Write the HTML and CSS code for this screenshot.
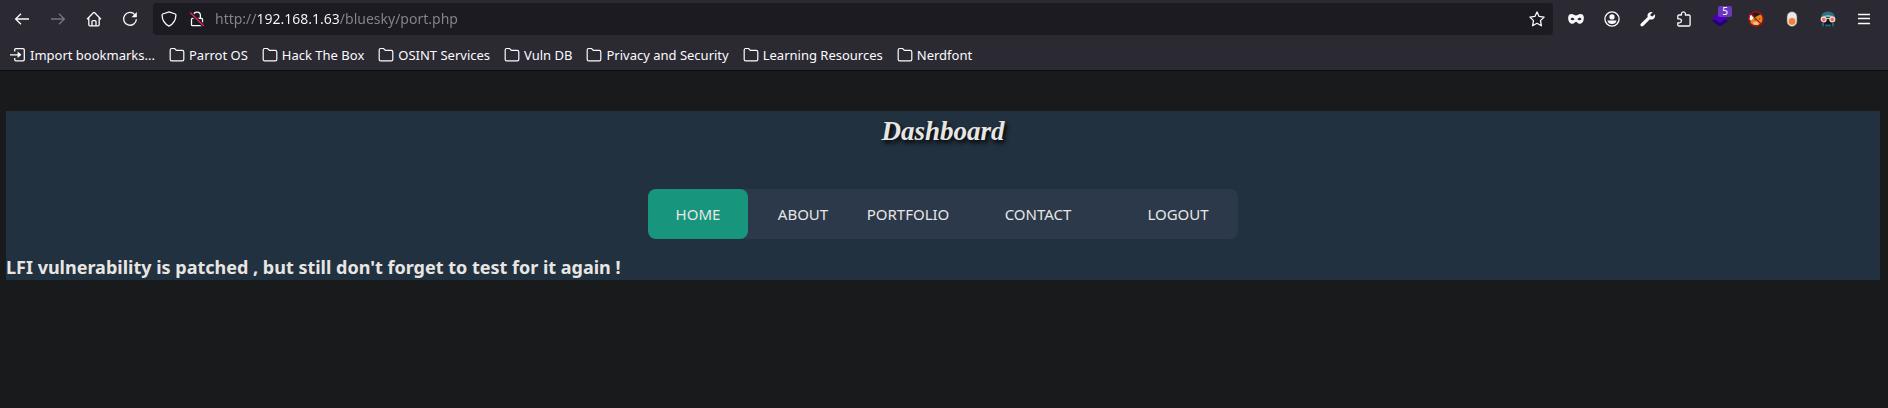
FILE: index.html
```html
<!DOCTYPE html>
<html lang="en">
<head>
<meta charset="utf-8">
<meta name="viewport" content="width=device-width, initial-scale=1">
<title>Dashboard</title>
<link rel="stylesheet" href="styles.css">
</head>
<body>
<svg class="sprite" aria-hidden="true">
  <symbol id="folder" viewBox="0 0 16 16"><path d="M1.2 13V3Q1.2 1.5 2.7 1.5H5.6L7.4 3.3H13.2Q14.8 3.3 14.8 4.9V12.4Q14.8 13.8 13.3 13.8H2.7Q1.2 13.8 1.2 12.4" fill="none" stroke="currentColor" stroke-width="1.2"/></symbol>
</svg>
<header class="browser">
  <div class="toolbar">
    <div class="group">
      <button class="tool" aria-label="Back"><svg viewBox="0 0 16 16" class="line"><path d="M15 8H1.5M7 2.7L1.6 8L7 13.3"/></svg></button>
      <button class="tool dim" aria-label="Forward" disabled><svg viewBox="0 0 16 16" class="line"><path d="M1 8H14.5M9 2.7L14.4 8L9 13.3"/></svg></button>
      <button class="tool" aria-label="Home"><svg viewBox="0 0 16 16" class="line"><path d="M1 8.2L7.3 1.8Q8 1.2 8.7 1.8L15 8.2M2.8 7V13.5Q2.8 14.8 4 14.8H12Q13.2 14.8 13.2 13.5V7M6 14.5V10.5Q6 9.6 7 9.6H9Q10 9.6 10 10.5V14.5"/></svg></button>
      <button class="tool" aria-label="Reload"><svg viewBox="0 0 16 16" class="line"><path d="M12.8 3.6A6.4 6.4 0 1 0 14.4 8.2"/><path d="M14.8 1V6.3H9.5Z" fill="currentColor" stroke="none"/></svg></button>
    </div>
    <div class="address">
      <button class="mark" aria-label="Tracking protection"><svg viewBox="0 0 16 16" class="line"><path d="M8 .9L14.3 3Q15 3.3 14.9 4.2Q14.7 11.6 8 15.1Q1.3 11.6 1.1 4.2Q1 3.3 1.7 3Z"/></svg></button>
      <button class="mark" aria-label="Connection not secure"><svg viewBox="0 0 16 16" class="line"><path d="M4.6 7V4.5A3.4 3.4 0 0 1 11.4 4.5V7M3.5 7.3H12.5Q13.5 7.3 13.5 8.3V13.7Q13.5 14.7 12.5 14.7H3.5Q2.5 14.7 2.5 13.7V8.3Q2.5 7.3 3.5 7.3Z"/><path d="M1.2 1.6L14.8 15" stroke="#1c1b22" stroke-width="3.6"/><path d="M1.2 1.6L14.8 15" stroke="#e22850" stroke-width="1.4"/></svg></button>
      <input class="url" type="text" aria-label="Address" value="http://192.168.1.63/bluesky/port.php" spellcheck="false">
      <button class="mark" aria-label="Bookmark this page"><svg viewBox="0 0 16 16" class="line"><path stroke-linejoin="round" d="M8 .9L10.1 5.4L15.1 6.1L11.5 9.6L12.4 14.8L8 12.3L3.6 14.8L4.5 9.6L.9 6.1L5.9 5.4Z"/></svg></button>
    </div>
    <div class="group">
      <button class="tool" aria-label="Private mask"><svg viewBox="0 0 16 16"><path fill="currentColor" fill-rule="evenodd" d="M.2 6.5C.4 3.8 1.7 3.1 3.4 3.1C5.4 3.1 6.7 4.6 8 4.6S10.6 3.1 12.6 3.1C14.3 3.1 15.6 3.8 15.8 6.5C16 10 14.3 12.8 11.6 12.8C9.8 12.8 8.9 10.7 8 10.7S6.2 12.8 4.4 12.8C1.7 12.8 0 10 .2 6.5ZM2.5 8.2C3.4 9.6 5.6 9.7 6.6 8.3C5.6 6.2 3.3 6.2 2.5 8.2ZM13.5 8.2C12.6 9.6 10.4 9.7 9.4 8.3C10.4 6.2 12.7 6.2 13.5 8.2Z"/></svg></button>
      <button class="tool" aria-label="Account"><svg viewBox="0 0 16 16"><circle cx="8" cy="8" r="7.1" fill="none" stroke="currentColor" stroke-width="1.3"/><circle cx="8" cy="5.9" r="2.6" fill="currentColor"/><path fill="currentColor" d="M3.4 9.4H12.6Q11.8 12.9 8 12.9T3.4 9.4Z"/></svg></button>
      <button class="tool" aria-label="Tools"><svg viewBox="0 0 16 16"><path fill="currentColor" d="M14.9 3.2L12.4 5.4L10.7 5.1L10.4 3.5L12.7 1.1C10.3.3 7.6 1.8 7.5 4.5L7.7 5.9L1 12.6C.1 13.5.3 14.5.9 15C1.6 15.6 2.5 15.5 3.2 14.9L9.9 8.3C13 9.4 15.9 6.5 14.9 3.2Z"/></svg></button>
      <button class="tool" aria-label="Extensions"><svg viewBox="0 0 16 16" class="line"><path stroke-linejoin="round" d="M1.8 5.3Q1.8 4 3 4H5.4V2.7Q5.5.8 7.4.8T9.4 2.7V4H12.8Q14.1 4 14.1 5.3V13.7Q14.1 15 12.8 15H3Q1.8 15 1.8 13.7V11.8H3.6Q5.5 11.5 5.5 9.8T3.6 7.8H1.8Z"/></svg></button>
      <button class="tool stacked" aria-label="Layers, 5 items"><svg viewBox="0 0 16 16"><path fill="#220079" d="M0 10L8 5.5L16 10L8 15.6Z"/><path fill="#4b00b8" d="M0 6.5L8 1L16 6.5L8 12Z"/></svg><span class="badge">5</span></button>
      <button class="tool" aria-label="Fox blocker"><svg viewBox="0 0 16 16"><path fill="#fff" d="M1 4L3.5 3.2L6 7L4 10L1.6 9Z"/><path fill="#241a1c" d="M5 2L9.5 1.5L11 4L8 6Z"/><path fill="#e08a1f" d="M4.2 8.2L8 5.8L10.2 4.4L13 3.4L14.8 7L14 11L10 14.4L4 13.6L2.2 11.2Z"/><path fill="#f4c48a" d="M5 11.6L8 10.6L11 11.8L9.5 14L6 13.8Z"/><path fill="#683018" d="M6 8.8L8 8.3L7.5 9.8ZM10.8 7.5L12.8 7.4L11.5 8.8Z"/><circle cx="8" cy="8" r="7.3" fill="none" stroke="#bd0808" stroke-width="1.2"/><path stroke="#bd0808" stroke-width="1.2" d="M2.8 2.8L13.2 13.2"/></svg></button>
      <button class="tool" aria-label="Toggle"><svg viewBox="0 0 16 16"><rect x="3" y=".7" width="10" height="14.8" rx="5" fill="#e9e9e5" stroke="#6a6a6a" stroke-width=".6"/><circle cx="8" cy="10.4" r="3.4" fill="#f58035"/></svg></button>
      <button class="tool" aria-label="User agent"><svg viewBox="0 0 16 16"><path fill="#111821" d="M1.8 7H14.2V15.6H1.8Z"/><path fill="#2e7183" d="M1.2 6.4Q1.6.4 8 .4T14.8 6.4Z"/><path fill="#a9c4c9" d="M4 4.9Q8 3.4 12 4.9V5.8H4Z"/><path fill="#286173" d="M1.8 12H4.2V15.6H1.8ZM11.8 12H14.2V15.6H11.8ZM5 13.4H11V15.6H5Z"/><circle cx="3.7" cy="8.4" r="2.4" fill="#ef6b4e" stroke="#f0d8ce" stroke-width="1.3"/><circle cx="12.3" cy="8.4" r="2.4" fill="#ef6b4e" stroke="#f0d8ce" stroke-width="1.3"/><path d="M6.2 7.6H9.8" stroke="#f0d8ce"/></svg></button>
      <button class="tool" aria-label="Menu"><svg viewBox="0 0 16 16" class="line"><path d="M2 3.5H14M2 7.5H14M2 12.5H14"/></svg></button>
    </div>
  </div>
  <nav class="bookmarks" aria-label="Bookmarks">
    <a href="#"><svg viewBox="0 0 16 16" class="line"><path d="M4.7 4.6V3Q4.7 1.7 6 1.7H13Q14.3 1.7 14.3 3V12.5Q14.3 13.8 13 13.8H6Q4.7 13.8 4.7 12.5V11M0 7.8H9"/><path d="M7.6 4.6L11.5 7.8L7.6 11Z" fill="currentColor" stroke="none"/></svg>Import bookmarks...</a>
    <a href="#"><svg><use href="#folder"/></svg>Parrot OS</a>
    <a href="#"><svg><use href="#folder"/></svg>Hack The Box</a>
    <a href="#"><svg><use href="#folder"/></svg>OSINT Services</a>
    <a href="#"><svg><use href="#folder"/></svg>Vuln DB</a>
    <a href="#"><svg><use href="#folder"/></svg>Privacy and Security</a>
    <a href="#"><svg><use href="#folder"/></svg>Learning Resources</a>
    <a href="#"><svg><use href="#folder"/></svg>Nerdfont</a>
  </nav>
</header>
<main class="page">
  <h1 class="title">Dashboard</h1>
  <nav class="menu" aria-label="Main">
    <a class="active" href="#">HOME</a>
    <a href="#">ABOUT</a>
    <a href="#">PORTFOLIO</a>
    <a href="#">CONTACT</a>
    <a href="#">LOGOUT</a>
  </nav>
  <h3 class="notice">LFI vulnerability is patched , but still don't forget to test for it again !</h3>
</main>
</body>
</html>
```
FILE: styles.css
```css
* { box-sizing: border-box; }
body {
  margin: 0;
  background: #181a1b;
  color: #e8e6e3;
  font-family: "Noto Sans", sans-serif;
}
a { color: inherit; text-decoration: none; }
button { border: 0; padding: 0; background: none; color: inherit; font: inherit; }
svg { display: block; width: 16px; height: 16px; flex: none; }
.sprite { position: absolute; width: 0; height: 0; }
.line { fill: none; stroke: currentColor; stroke-width: 1.3; }

.browser {
  background: #2b2a33;
  color: #fbfbfe;
  border-bottom: 1px solid #0c0c0d;
}
.toolbar { display: flex; align-items: center; gap: 5px; padding: 3px 6px 3px 4px; }
.group { display: flex; }
.tool { display: grid; place-items: center; width: 36px; height: 32px; }
.dim { color: #77767d; }
.stacked { position: relative; }
.badge {
  position: absolute;
  top: 3px;
  right: 6px;
  padding: 0 4px;
  border-radius: 2px;
  background: #6b37bd;
  font-size: 10px;
  line-height: 11px;
}
.address {
  display: flex;
  flex: 1;
  align-items: center;
  height: 32px;
  padding: 0 2px;
  border-radius: 4px;
  background: #1c1b22;
}
.mark { display: grid; place-items: center; width: 28px; height: 28px; }
.url {
  flex: 1;
  min-width: 0;
  margin: 0;
  padding: 0 0 0 4px;
  border: 0;
  outline: 0;
  background: linear-gradient(90deg, #87868c 45px, #fbfbfe 45px 128px, #87868c 128px);
  -webkit-background-clip: text;
  background-clip: text;
  color: transparent;
  font: 14px/24px "Noto Sans", sans-serif;
}
.bookmarks {
  display: flex;
  gap: 14px;
  padding: 7px 10px 5px;
  font-size: 13px;
  line-height: 20px;
  white-space: nowrap;
}
.bookmarks a { display: flex; align-items: center; gap: 4px; }

.page { margin: 40px 8px 0 6px; background: #22313f; }
.title {
  margin: 0;
  padding-bottom: 38px;
  font: italic bold 27px/40px "Z003", "URW Chancery L", "Monotype Corsiva", "Liberation Serif", serif;
  text-align: center;
  text-shadow: 2px 3px 4px #000;
}
.menu {
  display: grid;
  grid-template-columns: 100px 110px 100px 160px 120px;
  width: fit-content;
  margin: 0 auto;
  border-radius: 8px;
  background: #2b394a;
  font-size: 15px;
  line-height: 50px;
  text-align: center;
}
.active { border-radius: 8px; background: #17967d; }
.notice { margin: 0; padding-top: 16px; font-size: 18px; line-height: 25px; }
```
